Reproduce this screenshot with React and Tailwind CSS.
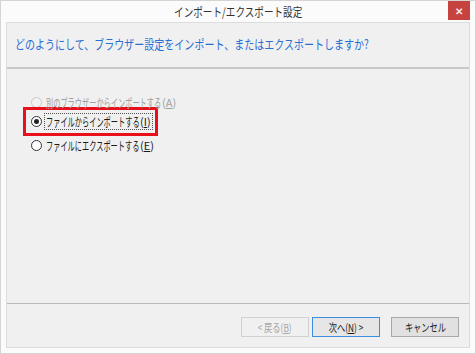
import React from "react";

const JP = { fontFamily: '"Noto Sans CJK JP", "Noto Sans", sans-serif' };

function Radio({ checked, disabled }) {
  return (
    <span
      className={`w-[11px] h-[11px] rounded-full border flex items-center justify-center shrink-0 ${
        disabled ? "border-[#c8c8c8] bg-[#f2f2f2]" : "border-[#333] bg-white"
      }`}
    >
      {checked && <span className="w-[5px] h-[5px] rounded-full bg-[#222]" />}
    </span>
  );
}

// kana are 1em wide in Noto CJK, so the squeezed label gets a fixed box
function Option({ label, keyChar, checked, disabled, focus, boxW }) {
  return (
    <div className={`flex items-center gap-[3px] h-[20px] text-[12px] shrink-0 ${disabled ? "text-[#a0a0a0]" : "text-[#1a1a1a]"}`}>
      <Radio checked={checked} disabled={disabled} />
      <span
        className={`flex items-center shrink-0 leading-[15px] px-[1px] whitespace-nowrap ${
          focus ? "outline outline-1 outline-dotted outline-[#555]" : ""
        }`}
      >
        <span className={`block shrink-0 overflow-visible ${boxW}`}>
          <span className="block w-max whitespace-nowrap origin-left scale-x-[0.6]">{label}</span>
        </span>
        <span className="text-[11px] shrink-0">
          (<span className="underline">{keyChar}</span>)
        </span>
      </span>
    </div>
  );
}

function Btn({ children, disabled, primary }) {
  return (
    <button
      className={`w-[68px] h-[20px] text-[11px] leading-none border flex items-center justify-center whitespace-nowrap ${
        disabled
          ? "border-[#d0d0d0] bg-[#f0f0f0] text-[#a6a6a6]"
          : primary
          ? "border-[#3c8ee0] bg-[#e6e6e6] text-[#1a1a1a]"
          : "border-[#a8a8a8] bg-[#e1e1e1] text-[#1a1a1a]"
      }`}
    >
      <span className="inline-block scale-x-[0.75]">{children}</span>
    </button>
  );
}

export default function App() {
  return (
    <div className="w-[476px] h-[354px] bg-[#fbfbfb] border border-[#d4d4d4] relative overflow-hidden" style={JP}>
      <div className="h-[21px] flex items-center justify-center text-[12px] text-[#333]">
        <span className="inline-block whitespace-nowrap scale-x-[0.8]">インポート/エクスポート設定</span>
      </div>
      <div className="absolute right-[5px] top-0 w-[22px] h-[19px] bg-[#c7433f] flex items-center justify-center">
        <span className="text-[#fbe3e3] text-[10px] font-bold leading-none">✕</span>
      </div>

      <div className="ml-[5px] w-[464px] h-[326px] bg-[#f0f0f0] border border-[#dcdcdc] flex flex-col">
        <div className="h-[46px] border-b-2 border-[#c9c9c9] px-[8px] pt-[12px] text-[13px] leading-[18px] text-[#2a6ed0]">
          <span className="inline-block whitespace-nowrap origin-left scale-x-[0.77]">
            どのようにして、ブラウザー設定をインポート、またはエクスポートしますか?
          </span>
        </div>
        <div className="flex-1 pl-[24px] pt-[23px] flex flex-col">
          <Option label="別のブラウザーからインポートする" keyChar="A" disabled boxW="w-[116px]" />
          <div className="-ml-[8px] mt-[-5px] w-[135px] h-[29px] border-[3px] border-[#e8101a] flex items-center pl-[5px]">
            <Option label="ファイルからインポートする" keyChar="I" checked focus boxW="w-[94px]" />
          </div>
          <div className="mt-[-1px]">
            <Option label="ファイルにエクスポートする" keyChar="E" boxW="w-[94px]" />
          </div>
        </div>
        <div className="h-[44px] border-t border-[#b8b8b8] flex items-start justify-end pr-[10px] pt-[13px]">
          <div className="flex gap-[3px]">
            <Btn disabled>
              &lt; 戻る(<span className="underline">B</span>)
            </Btn>
            <Btn primary>
              次へ(<span className="underline">N</span>) &gt;
            </Btn>
          </div>
          <div className="ml-[11px]">
            <Btn>キャンセル</Btn>
          </div>
        </div>
      </div>
    </div>
  );
}
